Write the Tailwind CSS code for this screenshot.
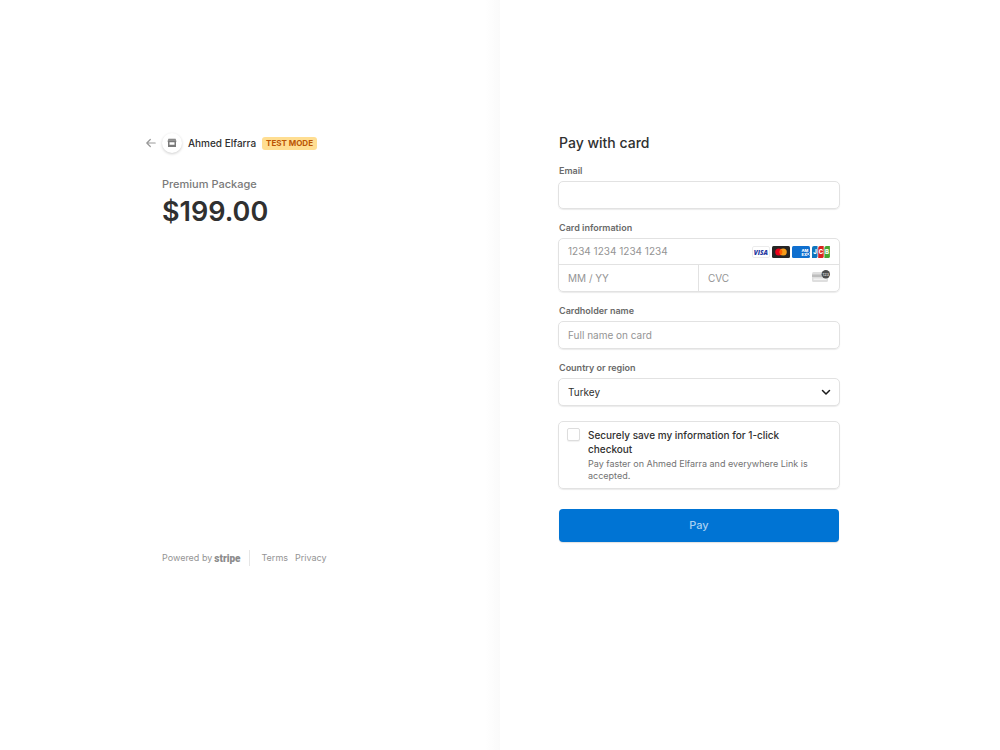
<!DOCTYPE html>
<html lang="en">
<head>
    <meta charset="UTF-8">
    <meta name="viewport" content="width=device-width, initial-scale=1.0">
    <title>Pay with card</title>
    <script src="https://cdn.jsdelivr.net/npm/@tailwindcss/browser@4"></script>
</head>
<body class="bg-white font-['Inter',sans-serif] text-[#303030] antialiased">
    <div class="grid min-h-screen grid-cols-2">

        <!-- Order summary -->
        <section class="flex justify-end bg-linear-to-l from-[#fafafa] to-white to-[3%] pt-[132px] pr-[58px]">
            <div class="flex h-[434px] w-[280px] flex-col justify-between">
                <div>
                    <header class="-ml-4 flex h-[22px] items-center">
                        <a href="#" aria-label="Back" class="text-[#999999]">
                            <svg class="h-[10px] w-[10px]" viewBox="0 0 10 10" fill="none" stroke="currentColor" stroke-width="1.2" stroke-linecap="round" stroke-linejoin="round">
                                <path d="M9.2 5H.8M4.3 1.5.8 5l3.5 3.5" />
                            </svg>
                        </a>
                        <span class="ml-[6px] flex h-5 w-5 items-center justify-center rounded-full bg-white shadow-[0_1px_3px_rgba(0,0,0,0.2)]">
                            <svg class="h-[10px] w-[10px]" viewBox="0 0 10 10" fill="#7a7a7a">
                                <path d="M1.4.7h7.2l.8 2.500-.4 1V9H1V4.200l-.4-1zM2.500 4.200v2.600h5V4.200z" fill-rule="evenodd" />
                                <path d="M1.200 2.100h7.600" stroke="#d0d0d0" stroke-width=".5" />
                            </svg>
                        </span>
                        <h1 class="ml-[6px] text-[10px] font-medium">Ahmed Elfarra</h1>
                        <span class="ml-[6px] rounded-[3px] bg-[#ffde92] px-1 text-[8px] leading-[13px] font-bold text-[#bb5504]">TEST MODE</span>
                    </header>
                    <p class="mt-[22px] text-[11px] leading-4 font-medium text-[#7a7a7a]">Premium Package</p>
                    <p class="mt-1 text-[27px] leading-8 font-semibold">$199.00</p>
                </div>

                <footer class="flex h-4 items-center text-[9px] text-[#949494]">
                    <a href="#" class="flex items-center gap-[2px]">Powered by <b class="font-['Roboto',sans-serif] text-[10px] font-black text-[#8c8c8c]">stripe</b></a>
                    <span class="mr-3 ml-2 h-4 w-px bg-[#e6e6e6]"></span>
                    <a href="#">Terms</a>
                    <a href="#" class="ml-[7px]">Privacy</a>
                </footer>
            </div>
        </section>

        <!-- Payment form -->
        <main class="pt-[132px] pl-[58px]">
            <form class="w-[282px]">
                <h2 class="pl-px text-[14px] leading-[22px] font-medium">Pay with card</h2>

                <label for="email" class="mt-[11px] block pl-px text-[9px] leading-3 font-semibold text-[#6a6a6a]">Email</label>
                <input id="email" type="email" class="mt-1 block h-7 w-full rounded-[5px] border border-[#e2e2e2] px-[9px] text-[10px] shadow-[0_1px_1px_rgba(0,0,0,0.08)]">

                <label for="card" class="mt-[13px] block pl-px text-[9px] leading-3 font-semibold text-[#6a6a6a]">Card information</label>
                <div class="mt-1 rounded-[5px] border border-[#e2e2e2] text-[10px] shadow-[0_1px_1px_rgba(0,0,0,0.08)]">
                    <div class="flex h-[26px] items-center border-b border-[#e2e2e2] px-[9px]">
                        <input id="card" type="text" placeholder="1234 1234 1234 1234" class="w-0 grow placeholder:text-[#949494]">
                        <div class="flex gap-[2px]">
                            <!-- Visa -->
                            <svg class="h-3 w-[18px]" viewBox="0 0 18 12">
                                <rect x=".5" y=".5" width="17" height="11" rx="1.5" fill="#fff" stroke="#ececec" />
                                <text x="8.8" y="8.5" text-anchor="middle" font-family="Open Sans, sans-serif" font-size="6.5" font-weight="800" font-style="italic" fill="#2438a0">VISA</text>
                            </svg>
                            <!-- Mastercard -->
                            <svg class="h-3 w-[18px]" viewBox="0 0 18 12">
                                <rect width="18" height="12" rx="1.5" fill="#252525" />
                                <circle cx="6.800" cy="6" r="3.600" fill="#eb001b" />
                                <circle cx="11.200" cy="6" r="3.600" fill="#f79e1b" />
                                <path d="M9 3.150a3.600 3.600 0 0 1 0 5.700 3.600 3.600 0 0 1 0-5.700z" fill="#ff5f00" />
                            </svg>
                            <!-- American Express -->
                            <svg class="h-3 w-[18px]" viewBox="0 0 18 12">
                                <rect width="18" height="12" rx="1.5" fill="#0f6fcf" />
                                <g font-family="Inter, sans-serif" font-size="4" font-weight="800" fill="#fff">
                                    <text x="9.500" y="5.500">AM</text>
                                    <text x="9.500" y="9.500">EX</text>
                                </g>
                                <path d="M15 6.500l2.500 3M17.500 6.500l-2.500 3" stroke="#fff" stroke-width=".8" />
                            </svg>
                            <!-- JCB -->
                            <svg class="h-3 w-[18px]" viewBox="0 0 18 12">
                                <path d="M2 0h3.500v10.400q0 1.600-1.600 1.600H0V2q0-2 2-2z" fill="#0f75bd" />
                                <path d="M8.200 0h3.500v10.400q0 1.600-1.600 1.600H6.200V2q0-2 2-2z" fill="#d8231f" />
                                <path d="M14.400 0h3.500v10.400q0 1.600-1.600 1.600h-3.900V2q0-2 2-2z" fill="#45a532" />
                                <g font-family="Inter, sans-serif" font-size="6" font-weight="800" fill="#fff" text-anchor="middle">
                                    <text x="2.900" y="8.200">J</text>
                                    <text x="9" y="8.200">C</text>
                                    <text x="15" y="8.200">B</text>
                                </g>
                            </svg>
                        </div>
                    </div>
                    <div class="grid h-[26px] grid-cols-2">
                        <input type="text" placeholder="MM / YY" aria-label="Expiration" class="min-w-0 border-r border-[#e2e2e2] px-[9px] placeholder:text-[#949494]">
                        <div class="flex items-center px-[9px]">
                            <input type="text" placeholder="CVC" aria-label="CVC" class="w-0 grow placeholder:text-[#949494]">
                            <svg class="h-4 w-[18px]" viewBox="0 0 18 16">
                                <rect y="2" width="16" height="10" rx="1.500" fill="#dedede" />
                                <path d="M0 4.500h16V7H0z" fill="#bdbdbd" />
                                <path d="M1.500 8.500h13v1.500h-13z" fill="#f2f2f2" />
                                <circle cx="13.800" cy="4.300" r="4.200" fill="#4d4d4d" />
                                <text x="13.800" y="5.800" text-anchor="middle" font-family="Inter, sans-serif" font-size="4" fill="#fff">123</text>
                            </svg>
                        </div>
                    </div>
                </div>

                <label for="name" class="mt-[13px] block pl-px text-[9px] leading-3 font-semibold text-[#6a6a6a]">Cardholder name</label>
                <input id="name" type="text" placeholder="Full name on card" class="mt-1 block h-7 w-full rounded-[5px] border border-[#e2e2e2] px-[9px] text-[10px] shadow-[0_1px_1px_rgba(0,0,0,0.08)] placeholder:text-[#949494]">

                <label for="country" class="mt-[13px] block pl-px text-[9px] leading-3 font-semibold text-[#6a6a6a]">Country or region</label>
                <div class="relative mt-1">
                    <select id="country" class="block h-7 w-full appearance-none rounded-[5px] border border-[#e2e2e2] bg-white px-[9px] text-[10px] shadow-[0_1px_1px_rgba(0,0,0,0.08)]">
                        <option>Turkey</option>
                    </select>
                    <svg class="pointer-events-none absolute top-[9px] right-[9px] h-[10px] w-[10px]" viewBox="0 0 10 10" fill="none" stroke="#1a1a1a" stroke-width="1.500" stroke-linecap="round" stroke-linejoin="round">
                        <path d="M1.500 3.500 5 7l3.500-3.500" />
                    </svg>
                </div>

                <div class="mt-[15px] flex gap-2 rounded-[5px] border border-[#e2e2e2] px-2 py-[6px] shadow-[0_1px_1px_rgba(0,0,0,0.08)]">
                    <input id="save" type="checkbox" class="h-[13px] w-[13px] shrink-0 appearance-none rounded-[2px] border border-[#dddddd] bg-white shadow-[0_1px_1px_rgba(0,0,0,0.06)]">
                    <label for="save" class="pr-3">
                        <span class="block text-[10px] leading-[14px] font-medium">Securely save my information for 1-click checkout</span>
                        <span class="mt-[2px] block text-[9px] leading-3 text-[#737373]">Pay faster on Ahmed Elfarra and everywhere Link is accepted.</span>
                    </label>
                </div>

                <div class="px-px">
                    <button type="submit" class="mt-5 block h-[33px] w-full rounded-[4px] bg-[#0074d4] text-[11px] font-medium text-[#a8d0f2] shadow-[0_1px_1px_rgba(0,0,0,0.12)]">Pay</button>
                </div>
            </form>
        </main>
    </div>
</body>
</html>
